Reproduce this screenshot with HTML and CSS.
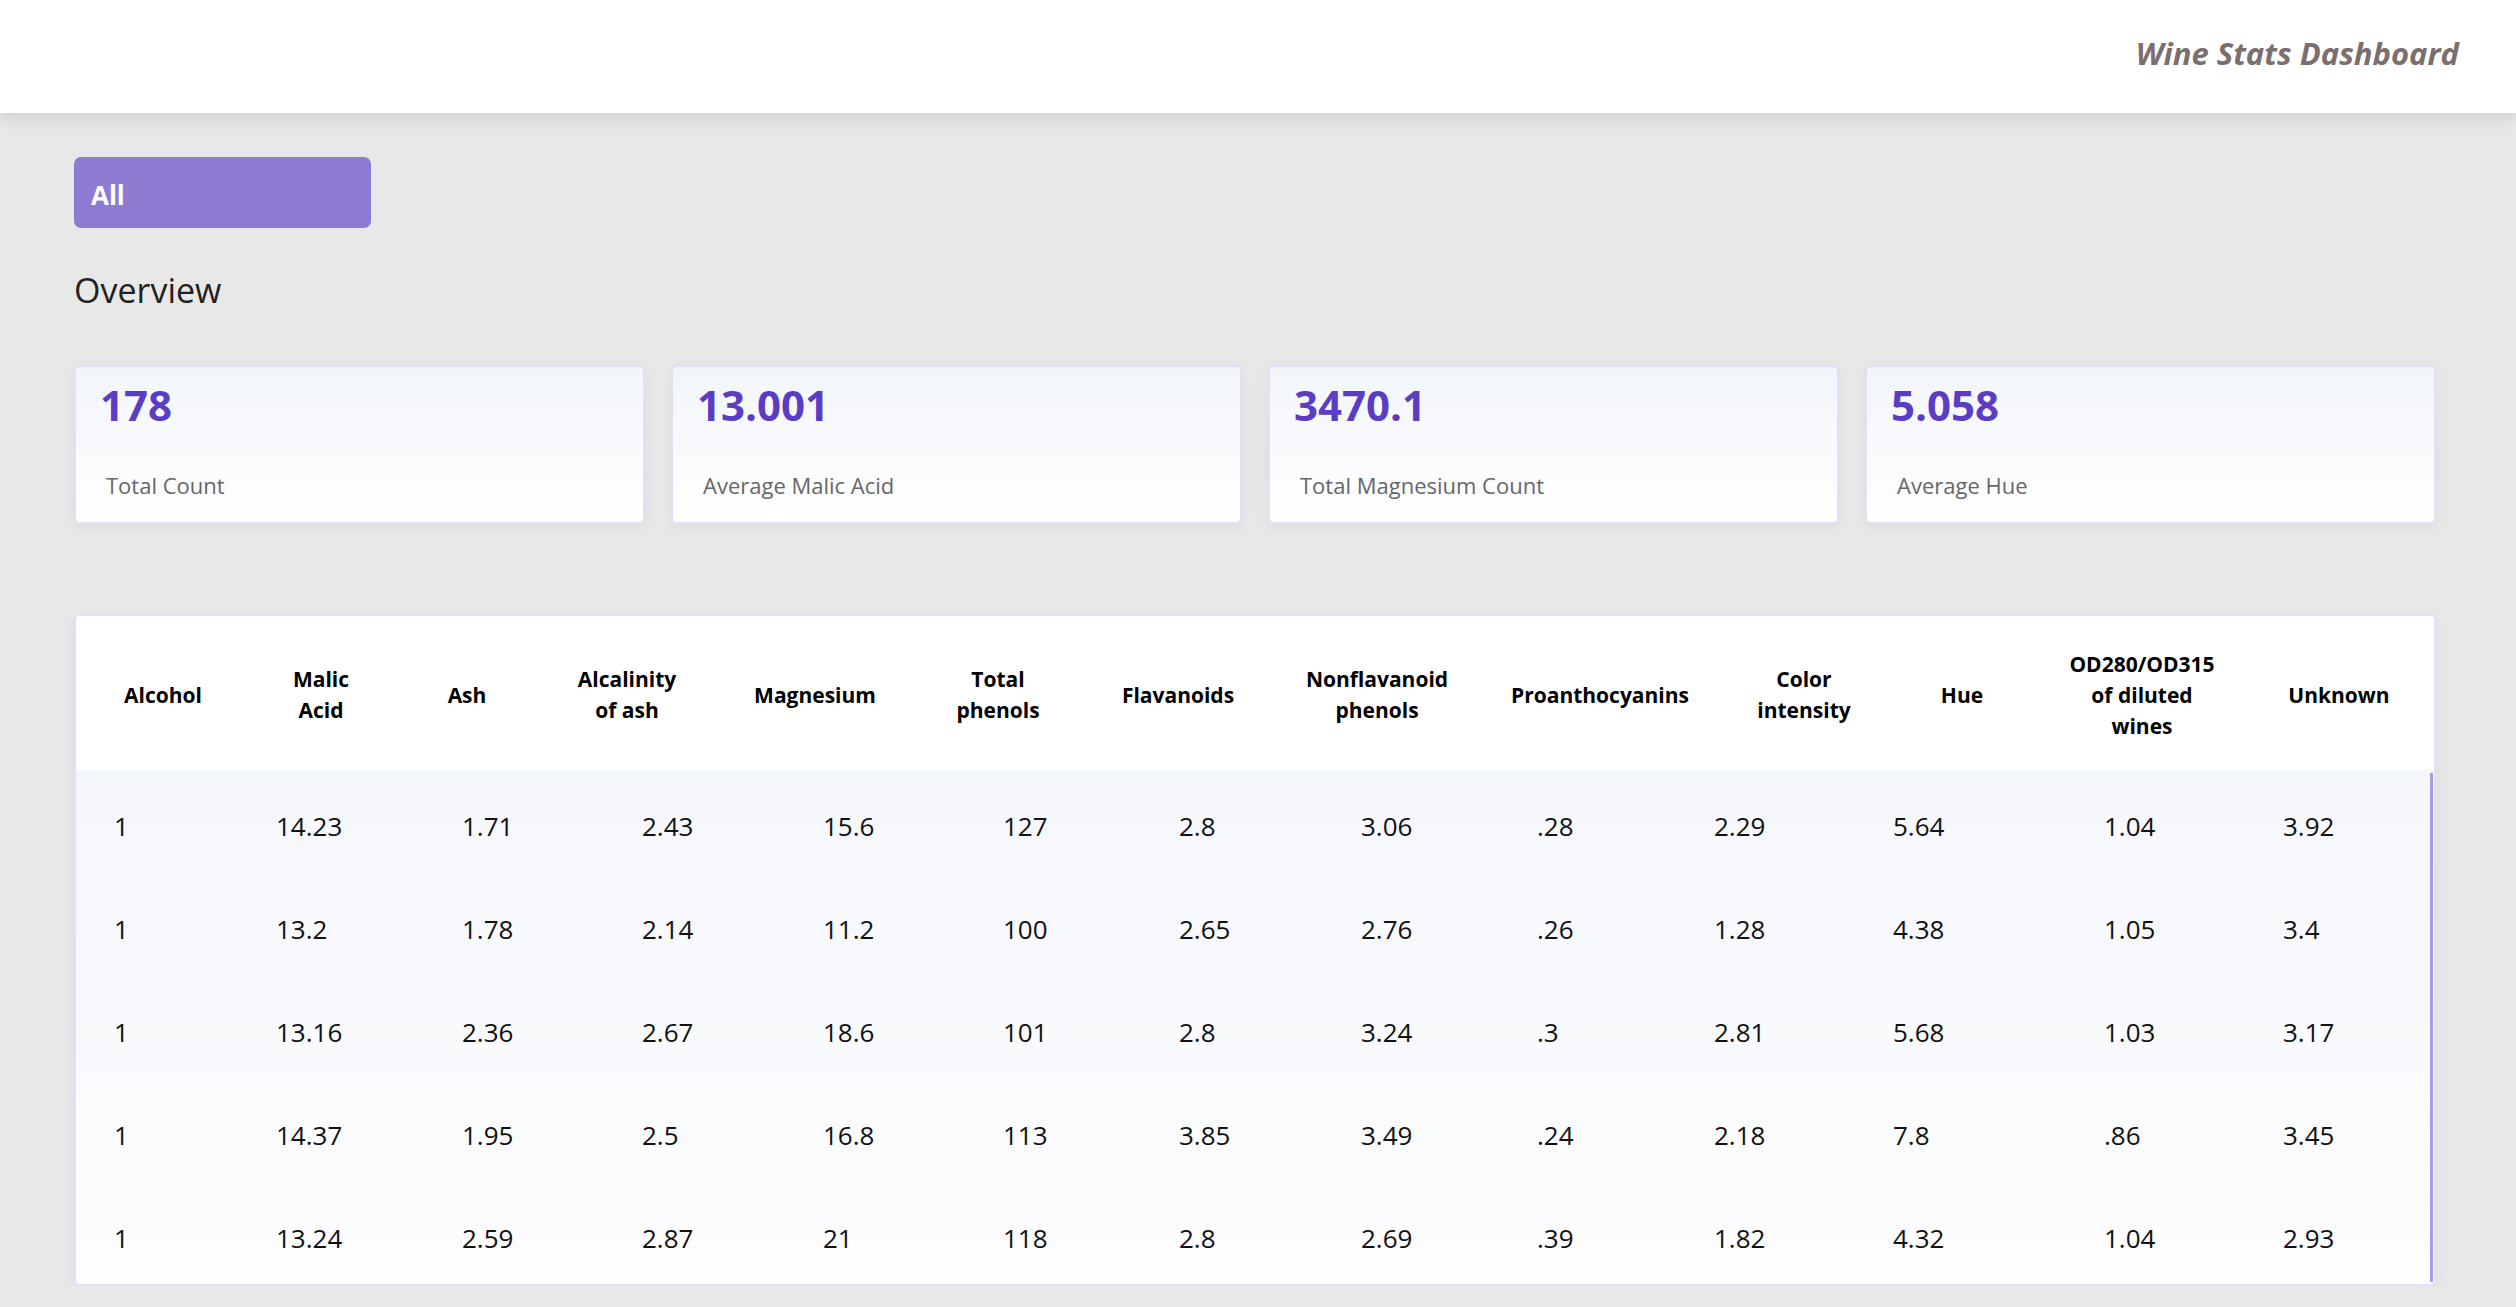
FILE: index.html
```html
<!DOCTYPE html>
<html lang="en">
<head>
<meta charset="utf-8">
<title>Wine Stats Dashboard</title>
<link rel="stylesheet" href="styles.css">
</head>
<body>
<header class="topbar">
  <h1 class="brand">Wine Stats Dashboard</h1>
</header>
<main class="main">
  <button class="filter-btn">All</button>
  <h2 class="section-title">Overview</h2>
  <section class="stats">
    <div class="stat-card"><div class="stat-value">178</div><div class="stat-label">Total Count</div></div>
    <div class="stat-card"><div class="stat-value">13.001</div><div class="stat-label">Average Malic Acid</div></div>
    <div class="stat-card"><div class="stat-value">3470.1</div><div class="stat-label">Total Magnesium Count</div></div>
    <div class="stat-card"><div class="stat-value">5.058</div><div class="stat-label">Average Hue</div></div>
  </section>
  <section class="table-card">
    <table class="head-table">
      <colgroup><col><col><col><col><col><col><col><col><col><col><col><col><col></colgroup>
      <thead>
        <tr>
          <th>Alcohol</th>
          <th>Malic<br>Acid</th>
          <th>Ash</th>
          <th>Alcalinity<br>of ash</th>
          <th>Magnesium</th>
          <th>Total<br>phenols</th>
          <th>Flavanoids</th>
          <th>Nonflavanoid<br>phenols</th>
          <th>Proanthocyanins</th>
          <th>Color<br>intensity</th>
          <th>Hue</th>
          <th>OD280/OD315<br>of diluted<br>wines</th>
          <th>Unknown</th>
        </tr>
      </thead>
    </table>
    <div class="body-scroll">
      <table class="body-table">
        <colgroup><col><col><col><col><col><col><col><col><col><col><col><col><col></colgroup>
        <tbody>
          <tr><td>1</td><td>14.23</td><td>1.71</td><td>2.43</td><td>15.6</td><td>127</td><td>2.8</td><td>3.06</td><td>.28</td><td>2.29</td><td>5.64</td><td>1.04</td><td>3.92</td></tr>
          <tr><td>1</td><td>13.2</td><td>1.78</td><td>2.14</td><td>11.2</td><td>100</td><td>2.65</td><td>2.76</td><td>.26</td><td>1.28</td><td>4.38</td><td>1.05</td><td>3.4</td></tr>
          <tr><td>1</td><td>13.16</td><td>2.36</td><td>2.67</td><td>18.6</td><td>101</td><td>2.8</td><td>3.24</td><td>.3</td><td>2.81</td><td>5.68</td><td>1.03</td><td>3.17</td></tr>
          <tr><td>1</td><td>14.37</td><td>1.95</td><td>2.5</td><td>16.8</td><td>113</td><td>3.85</td><td>3.49</td><td>.24</td><td>2.18</td><td>7.8</td><td>.86</td><td>3.45</td></tr>
          <tr><td>1</td><td>13.24</td><td>2.59</td><td>2.87</td><td>21</td><td>118</td><td>2.8</td><td>2.69</td><td>.39</td><td>1.82</td><td>4.32</td><td>1.04</td><td>2.93</td></tr>
        </tbody>
      </table>
    </div>
  </section>
</main>
</body>
</html>
```

FILE: styles.css
```css
* { box-sizing: border-box; }
html, body { margin: 0; padding: 0; }
body {
  background: #e8e8e8;
  font-family: "Open Sans", "Noto Sans", "Liberation Sans", sans-serif;
  color: #222;
  overflow: hidden;
}
.topbar {
  height: 113px;
  background: #fff;
  display: flex;
  justify-content: flex-end;
  align-items: center;
  padding: 0 57px 8px 0;
  box-shadow: 0 4px 16px rgba(0, 0, 0, 0.12);
  position: relative;
  z-index: 1;
}
.brand {
  margin: 0;
  font-size: 31px;
  font-weight: 700;
  font-style: italic;
  color: #7a6e6e;
}
.main {
  padding: 44px 80px 0 74px;
}
.filter-btn {
  display: block;
  width: 297px;
  height: 71px;
  background: #8d7bd3;
  border: none;
  border-radius: 7px;
  color: #fff;
  font-family: inherit;
  font-size: 26px;
  font-weight: 700;
  text-align: left;
  padding: 4px 0 0 17px;
}
.section-title {
  margin: 39px 0 0 0;
  font-size: 34px;
  line-height: 46px;
  font-weight: 400;
  color: #222;
}
.stats {
  margin-top: 52px;
  display: grid;
  grid-template-columns: repeat(4, 1fr);
  gap: 26px;
}
.stat-card {
  height: 159px;
  border: 2px solid #e0e0fb;
  border-radius: 6px;
  background: linear-gradient(#f2f5fa, #ffffff);
  box-shadow: 0 4px 14px rgba(0, 0, 0, 0.05);
  padding: 13px 24px 0 24px;
}
.stat-value {
  font-size: 42px;
  line-height: 50px;
  font-weight: 700;
  color: #5b3cc4;
}
.stat-label {
  margin-top: 40px;
  padding-left: 6px;
  font-size: 22px;
  line-height: 30px;
  color: #676767;
}
.table-card {
  margin-top: 90px;
  height: 672px;
  border: 2px solid #e0e0fb;
  border-radius: 6px;
  background: linear-gradient(#f2f5f9, #fdfdff);
  box-shadow: 0 4px 14px rgba(0, 0, 0, 0.05);
  overflow: hidden;
}
table {
  border-collapse: collapse;
  table-layout: fixed;
  width: 100%;
}
.head-table { background: #fff; }
.head-table th {
  height: 154px;
  font-size: 21px;
  line-height: 31px;
  font-weight: 700;
  color: #000;
  text-align: center;
  vertical-align: middle;
  padding: 4px 0 0 0;
}
.head-table col:nth-child(1) { width: 174px; }
.head-table col:nth-child(2) { width: 142px; }
.head-table col:nth-child(3) { width: 150px; }
.head-table col:nth-child(4) { width: 170px; }
.head-table col:nth-child(5) { width: 206px; }
.head-table col:nth-child(6) { width: 160px; }
.head-table col:nth-child(7) { width: 200px; }
.head-table col:nth-child(8) { width: 198px; }
.head-table col:nth-child(9) { width: 248px; }
.head-table col:nth-child(10) { width: 160px; }
.head-table col:nth-child(11) { width: 156px; }
.head-table col:nth-child(12) { width: 204px; }
.body-scroll {
  height: 514px;
  overflow: hidden;
  padding-top: 4px;
  padding-right: 4px;
  background: linear-gradient(#ab9be3, #ab9be3) right 1px top 3px / 3px calc(100% - 5px) no-repeat;
}
.body-table td {
  height: 103px;
  padding: 0;
  font-size: 26px;
  color: #111;
  vertical-align: middle;
  text-align: left;
  white-space: nowrap;
}
.body-table td:first-child { padding-left: 38px; }
.body-table col:nth-child(1) { width: 200px; }
.body-table col:nth-child(2) { width: 186px; }
.body-table col:nth-child(3) { width: 180px; }
.body-table col:nth-child(4) { width: 181px; }
.body-table col:nth-child(5) { width: 180px; }
.body-table col:nth-child(6) { width: 176px; }
.body-table col:nth-child(7) { width: 182px; }
.body-table col:nth-child(8) { width: 176px; }
.body-table col:nth-child(9) { width: 177px; }
.body-table col:nth-child(10) { width: 179px; }
.body-table col:nth-child(11) { width: 211px; }
.body-table col:nth-child(12) { width: 179px; }
```
